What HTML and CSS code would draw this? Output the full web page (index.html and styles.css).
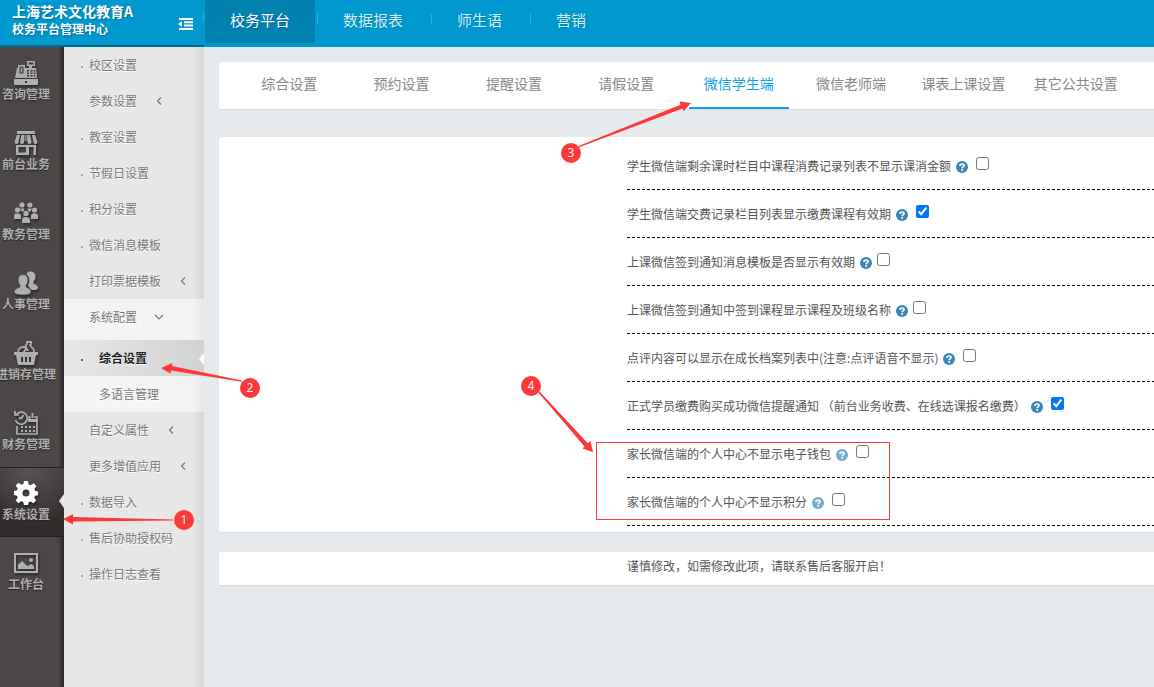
FILE: index.html
```html
<!DOCTYPE html>
<html lang="zh-CN">
<head>
<meta charset="utf-8">
<title>校务平台管理中心</title>
<link rel="stylesheet" href="styles.css">
</head>
<body>
<svg class="defs" aria-hidden="true">
  <symbol id="help" viewBox="0 0 12 12">
    <circle cx="6" cy="6" r="6" fill="#3a87b9"/>
    <path d="M4 4.900C4 3.600 4.900 3 6 3C7.200 3 8 3.600 8 4.500C8 5.700 6.200 5.600 6.200 7.200" fill="none" stroke="#fff" stroke-width="1.700"/>
    <path d="M5.300 8h1.800v1.700H5.300z" fill="#fff"/>
  </symbol>
  <symbol id="left" viewBox="0 0 8 10"><path d="M6 1.500 2.500 5 6 8.500" fill="none" stroke="#777" stroke-width="1.200"/></symbol>
  <symbol id="down" viewBox="0 0 10 8"><path d="M1 2l4 4 4-4" fill="none" stroke="#777" stroke-width="1.200"/></symbol>
</svg>

<header class="header">
  <div class="brand">
    <div class="brand-text">
      <strong class="brand-name">上海艺术文化教育A</strong>
      <strong class="brand-sub">校务平台管理中心</strong>
    </div>
    <button class="collapse" type="button" aria-label="收起菜单">
      <svg width="16" height="12" viewBox="0 0 16 12" fill="#fff"><path d="M1 0h14v2H1zM6 3.300h9v2H6zM6 6.600h9v2H6zM1 10h14v2H1zM4 3v6L0 6z"/></svg>
    </button>
  </div>
  <nav class="topnav">
    <a class="top-link top-active" href="#">校务平台</a>
    <a class="top-link" href="#">数据报表</a>
    <a class="top-link" href="#">师生语</a>
    <a class="top-link" href="#">营销</a>
  </nav>
</header>

<div class="shell">
  <nav class="rail">
    <a class="rail-item" href="#">
      <svg class="rail-icon" viewBox="0 0 24 24" fill="currentColor"><path fill-rule="evenodd" d="M13 0h8v5h-3v2h4l1 10H1L3 7h1V4h7v3h4V5h-2zM14.500 1.500v2h5v-2zM5.500 5.500v7h4v-7zM13 9v1.500h2V9zm3.500 0v1.500h2V9zm3.200 0v1.500h1.600V9zM13 11.500V13h2v-1.500zm3.500 0V13h2v-1.500zm3.200 0V13h1.600v-1.500zM13 14v1.500h2V14zm3.500 0v1.500h2V14zm3.200 0v1.500h1.600V14zM0 18h24v5a1 1 0 0 1-1 1H1a1 1 0 0 1-1-1zm11 2v2h2v-2z"/><path d="M6.700 6.500h1.600v5H6.700z"/></svg>
      <span class="rail-label">咨询管理</span>
    </a>
    <a class="rail-item" href="#">
      <svg class="rail-icon" viewBox="0 0 24 24" fill="currentColor"><path d="M3 0h18v3H3z"/><path d="M3 4h3L4.500 11a2 2 0 0 1-4 0zM7.500 4h3l-.5 7a2 2 0 0 1-4 0zM13 4h3l1.500 7a2 2 0 0 1-4 0zM18 4h3l2.500 7a2 2 0 0 1-4 0z"/><path d="M11 4h1.500l.5 6h-2.500z" opacity=".6"/><path fill-rule="evenodd" d="M2 14h20v10H2zm2.500 2v5.500H12V16zm10.500 0v8h4.500v-8z"/></svg>
      <span class="rail-label">前台业务</span>
    </a>
    <a class="rail-item" href="#">
      <svg class="rail-icon" viewBox="0 0 24 24" fill="currentColor"><circle cx="8" cy="4" r="2.600"/><circle cx="16" cy="4" r="2.600"/><circle cx="3.500" cy="9" r="2.600"/><circle cx="20.500" cy="9" r="2.600"/><circle cx="12" cy="12.500" r="2.700"/><path d="M6 7.500h4.500l-1 3H7.500zM13.500 7.500H18l-1.500 3h-2zM0 18v-2.500C0 13 1 12.300 3.500 12.300S7 13 7 15.500V18zM17 18v-2.500c0-2.500 1-3.200 3.500-3.200s3.500.7 3.500 3.200V18zM8 22v-3c0-2 1.500-3 4-3s4 1 4 3v3z"/></svg>
      <span class="rail-label">教务管理</span>
    </a>
    <a class="rail-item" href="#">
      <svg class="rail-icon" viewBox="0 0 24 24" fill="currentColor"><path d="M12.500 3c1-2 2.500-2.500 4-2.500 3 0 5 2 5 5 0 2.500-1 4-2 5v2c2 1 4.500 2 4.500 4 0 1.500-1 2.500-3 2.500h-3.500l-2.500-3-1-2c2.500-4 1-8.500-1.500-11z"/><path stroke="#4b4747" stroke-width=".8" d="M9 3.500c3 0 5 2 5 5.500 0 2.500-1 4-2 5v2c2 1 5 2 5 4.500S14 24 9 24s-9-1-9-3.500S4 17 6 16v-2c-1-1-2-2.500-2-5 0-3.500 2-5.500 5-5.500z"/></svg>
      <span class="rail-label">人事管理</span>
    </a>
    <a class="rail-item" href="#">
      <svg class="rail-icon" viewBox="0 0 24 24" fill="currentColor"><path d="M4 12c0-4 2.500-6 5.500-6 2 0 3.500 1.500 4.500 4M9 12l3-4V4l1-1V1h4v2l-1 1 4 5v3" fill="none" stroke="currentColor" stroke-width="1.800"/><path fill-rule="evenodd" d="M0 11h24v3h-2l-2 10H4L2 14H0zm7 5v5h2v-5zm4 0v5h2v-5zm4 0v5h2v-5z"/></svg>
      <span class="rail-label">进销存管理</span>
    </a>
    <a class="rail-item" href="#">
      <svg class="rail-icon" viewBox="0 0 24 24" fill="currentColor"><path d="M2.500 3.500A6 6 0 1 1 1.500 9M1 0v4h4M7 8l2.500-4M7 8 5 6.500M3 15v8h20V6h-3" fill="none" stroke="currentColor" stroke-width="1.700"/><path d="M17.500 2h2v5h-2zM14.500 5h2v3H23v3h-9z"/><path d="M7 15h2v2H7zm4 0h2v2h-2zm4 0h2v2h-2zm4 0h2v2h-2zM7 19h2v2H7zm4 0h2v2h-2zm4 0h2v2h-2zm4 0h2v2h-2z"/></svg>
      <span class="rail-label">财务管理</span>
    </a>
    <a class="rail-item rail-active" href="#">
      <svg class="rail-icon" viewBox="0 0 24 24"><path fill="#fff" fill-rule="evenodd" d="M10 0h4l.7 3.500 2 .8 3-2 2.700 2.700-2 3 .8 2L24 10.500v3.700l-2.900.6-.8 2 1.900 2.800-2.700 2.700-2.800-1.900-2 .8L14 24h-4l-.7-2.900-2-.8-2.900 2-2.700-2.800 2-2.800-.9-2L0 14v-4l2.800-.5.900-2-2-3 2.700-2.700 3 2 2-.8zM12 8.500a3.500 3.500 0 1 0 0 7 3.500 3.500 0 0 0 0-7z"/></svg>
      <span class="rail-label">系统设置</span>
    </a>
    <a class="rail-item" href="#">
      <svg class="rail-icon" viewBox="0 0 24 24" fill="currentColor"><path fill-rule="evenodd" d="M0 2h24v20H0zm2 2v16h20V4z"/><circle cx="17" cy="9" r="2"/><path d="M4 18v-4l4-4 4 4 2 1 3-2 3 2v3z"/></svg>
      <span class="rail-label">工作台</span>
    </a>
  </nav>

  <nav class="menu">
    <a class="menu-item dot" href="#">校区设置</a>
    <a class="menu-item" href="#">参数设置<svg class="chev"><use href="#left"/></svg></a>
    <a class="menu-item dot" href="#">教室设置</a>
    <a class="menu-item dot" href="#">节假日设置</a>
    <a class="menu-item dot" href="#">积分设置</a>
    <a class="menu-item dot" href="#">微信消息模板</a>
    <a class="menu-item" href="#">打印票据模板<svg class="chev"><use href="#left"/></svg></a>
    <div class="menu-open">
      <a class="menu-item menu-head" href="#">系统配置<svg class="chev"><use href="#down"/></svg></a>
      <a class="menu-item menu-child menu-active dot" href="#">综合设置</a>
      <a class="menu-item menu-child" href="#">多语言管理</a>
    </div>
    <a class="menu-item" href="#">自定义属性<svg class="chev"><use href="#left"/></svg></a>
    <a class="menu-item" href="#">更多增值应用<svg class="chev"><use href="#left"/></svg></a>
    <a class="menu-item dot" href="#">数据导入</a>
    <a class="menu-item dot" href="#">售后协助授权码</a>
    <a class="menu-item dot" href="#">操作日志查看</a>
  </nav>

  <main class="main">
    <div class="card tabs" role="tablist">
      <button class="tab" type="button" role="tab">综合设置</button>
      <button class="tab" type="button" role="tab">预约设置</button>
      <button class="tab" type="button" role="tab">提醒设置</button>
      <button class="tab" type="button" role="tab">请假设置</button>
      <button class="tab tab-active" type="button" role="tab" aria-selected="true">微信学生端</button>
      <button class="tab" type="button" role="tab">微信老师端</button>
      <button class="tab" type="button" role="tab">课表上课设置</button>
      <button class="tab" type="button" role="tab">其它公共设置</button>
    </div>

    <form class="card settings">
      <div class="row"><label for="s1">学生微信端剩余课时栏目中课程消费记录列表不显示课消金额</label><svg class="help"><use href="#help"/></svg><input class="check spaced" id="s1" type="checkbox"></div>
      <div class="row"><label for="s2">学生微信端交费记录栏目列表显示缴费课程有效期</label><svg class="help"><use href="#help"/></svg><input class="check spaced" id="s2" type="checkbox" checked></div>
      <div class="row"><label for="s3">上课微信签到通知消息模板是否显示有效期</label><svg class="help"><use href="#help"/></svg><input class="check" id="s3" type="checkbox"></div>
      <div class="row"><label for="s4">上课微信签到通知中签到课程显示课程及班级名称</label><svg class="help"><use href="#help"/></svg><input class="check" id="s4" type="checkbox"></div>
      <div class="row"><label for="s5">点评内容可以显示在成长档案列表中(注意:点评语音不显示)</label><svg class="help"><use href="#help"/></svg><input class="check spaced" id="s5" type="checkbox"></div>
      <div class="row"><label for="s6">正式学员缴费购买成功微信提醒通知 （前台业务收费、在线选课报名缴费）</label><svg class="help"><use href="#help"/></svg><input class="check spaced" id="s6" type="checkbox" checked></div>
      <div class="row"><label for="s7">家长微信端的个人中心不显示电子钱包</label><svg class="help faded"><use href="#help"/></svg><input class="check spaced" id="s7" type="checkbox"></div>
      <div class="row"><label for="s8">家长微信端的个人中心不显示积分</label><svg class="help faded"><use href="#help"/></svg><input class="check spaced" id="s8" type="checkbox"></div>
    </form>

    <p class="card notice">谨慎修改，如需修改此项，请联系售后客服开启！</p>
  </main>
</div>

<svg class="marks" width="900" height="540" viewBox="0 0 900 540">
  <rect x="596.5" y="442.500" width="293" height="77" fill="none" stroke="#fd3b3b"/>
  <g fill="#fd3838">
    <path d="M63 519l10-5v3l100 2.500v1L73 521.500v3z"/>
    <path d="M161 368l11.500-5-.6 3L242 380.500l-.3 1.200L171 370.500l-.7 3z"/>
    <path d="M691 103l-11.500-1.500 1 3.200L578.500 146l.5 1.200L682.500 108.500l1.200 2.800z"/>
    <path d="M593 452l-2.500-11-2.700 2.300L539.500 391.500l-1.200 1L584.500 446.500l-2 2z"/>
    <circle cx="184" cy="520" r="10"/>
    <circle cx="250" cy="388" r="10"/>
    <circle cx="571" cy="153" r="10"/>
    <circle cx="531" cy="386" r="10"/>
  </g>
  <g class="mark-num">
    <text x="184" y="524">1</text>
    <text x="250" y="392">2</text>
    <text x="571" y="157">3</text>
    <text x="531" y="390">4</text>
  </g>
</svg>
</body>
</html>
```
FILE: styles.css
```css
* { box-sizing: border-box; }

body {
  position: relative;
  display: flex;
  flex-direction: column;
  min-height: 100vh;
  margin: 0;
  background: #e6eaed;
  color: #555;
  font: 12px/18px "Noto Sans CJK SC", "Open Sans", sans-serif;
}

a { color: inherit; text-decoration: none; }
.defs { position: absolute; width: 0; height: 0; }

/* Header */
.header { display: flex; height: 47px; background: #0099cf; color: #fff; }
.brand {
  display: flex;
  justify-content: space-between;
  width: 204px;
  padding: 2px 10px 0 12px;
  border-bottom: 2px solid #006a92;
  background: linear-gradient(#35afd9, #35afd9) right 12px / 1px 10px no-repeat;
}
.brand-text { display: flex; flex-direction: column; white-space: nowrap; text-shadow: 1px 1px 2px rgba(0, 0, 0, .3); }
.brand-name { font-size: 14px; line-height: 18px; }
.brand-sub { font-size: 12px; line-height: 18px; }
.collapse { align-self: center; display: flex; padding: 0; border: 0; background: none; }
.topnav { display: flex; align-items: flex-start; padding-left: 1px; }
.top-link {
  padding: 0 28px 0 26px;
  color: #d3eff9;
  font-size: 15px;
  line-height: 40px;
  background: linear-gradient(#35afd9, #35afd9) left 14px / 1px 10px no-repeat;
  text-shadow: 1px 1px 1px rgba(0, 0, 0, .15);
}
.top-active { height: 43px; margin-right: 2px; padding: 0 25px; background: #0081ae; color: #fff; }

.shell { display: flex; flex: 1; }

/* Icon rail */
.rail {
  width: 64px;
  flex: none;
  background: linear-gradient(90deg, rgba(0, 0, 0, 0) 58px, rgba(0, 0, 0, .45)) #4b4747;
  color: #b0aeae;
}
.rail-item {
  display: flex;
  flex-direction: column;
  align-items: center;
  height: 70px;
  padding: 14px 12px 0 0;
  font-weight: bold;
}
.rail-icon { width: 24px; height: 24px; flex: none; filter: drop-shadow(1px 2px 1px rgba(0, 0, 0, .4)); }
.rail-label { white-space: nowrap; text-shadow: 0 1px 1px #222; }
.rail-active {
  position: relative;
  background: radial-gradient(circle at 30px 0, #5a5454, #322c2c 60px);
  box-shadow: inset 0 1px #221f1f, inset 0 -1px #221f1f;
}
.rail-active::after {
  content: "";
  position: absolute;
  right: 0;
  top: 27px;
  border: 7px solid transparent;
  border-right: 5px solid #e8e7e7;
  border-left: 0;
}

/* Text menu */
.menu {
  width: 140px;
  flex: none;
  background: linear-gradient(90deg, rgba(0, 0, 0, 0) 128px, rgba(0, 0, 0, .08)) #e8e7e7;
  color: #777;
}
.menu-item { display: flex; align-items: center; height: 36px; padding-left: 25px; white-space: nowrap; text-shadow: 0 1px #fff; }
.chev { width: 10px; height: 10px; margin-left: 17px; }
.dot::before { content: ""; width: 2px; height: 2px; margin: 4px 6px 0 -8px; background: #aaa; }
.menu-open { background: linear-gradient(90deg, rgba(0, 0, 0, 0) 128px, rgba(0, 0, 0, .05)) #f4f4f4; }
.menu-head { height: 41px; padding-bottom: 5px; }
.menu-child { padding-left: 35px; }
.menu-active {
  position: relative;
  background: linear-gradient(90deg, #e9e8e8, #d2d2d2);
  color: #222;
  font-weight: bold;
}
.menu-active::before { margin: 4px 16px 0 -18px; background: #555; }
.menu-active::after {
  content: "";
  position: absolute;
  right: 0;
  top: 13px;
  border: 6px solid transparent;
  border-right: 5px solid #fff;
  border-left: 0;
}

/* Content */
.main { flex: 1; min-width: 0; padding: 15px 0 0 15px; }
.card { margin: 0; background: #fff; border-bottom: 1px solid #d9dcde; border-radius: 3px 0 0 3px; }
.tabs { display: grid; grid-template-columns: repeat(8, 1fr); height: 48px; padding: 0 22px 0 14px; }
.tab {
  margin: 0 6px;
  padding: 0 0 3px;
  border: 0;
  border-bottom: 2px solid transparent;
  background: none;
  color: #888;
  font: 14px/20px "Noto Sans CJK SC", sans-serif;
  white-space: nowrap;
}
.tab-active { border-color: #109fec; color: #109fec; }

.settings { margin-top: 27px; padding: 5px 0 6px 408px; }
.row {
  display: flex;
  align-items: center;
  height: 48px;
  white-space: nowrap;
  background: repeating-linear-gradient(90deg, #000 0 3px, transparent 3px 5px) left bottom / 100% 1px no-repeat;
}
.help { width: 12px; height: 12px; margin: 2px 5px 0 5px; }
.faded { opacity: .7; }
.check { width: 13px; height: 13px; margin: 0 0 6px; }
.spaced { margin-left: 3px; }
.notice { margin-top: 19px; padding: 5px 0 10px 408px; }

/* Numbered callouts drawn over the page */
.marks { position: absolute; left: 0; top: 0; pointer-events: none; }
.mark-num { fill: #fff; font: 12px "Open Sans", sans-serif; text-anchor: middle; }
```
